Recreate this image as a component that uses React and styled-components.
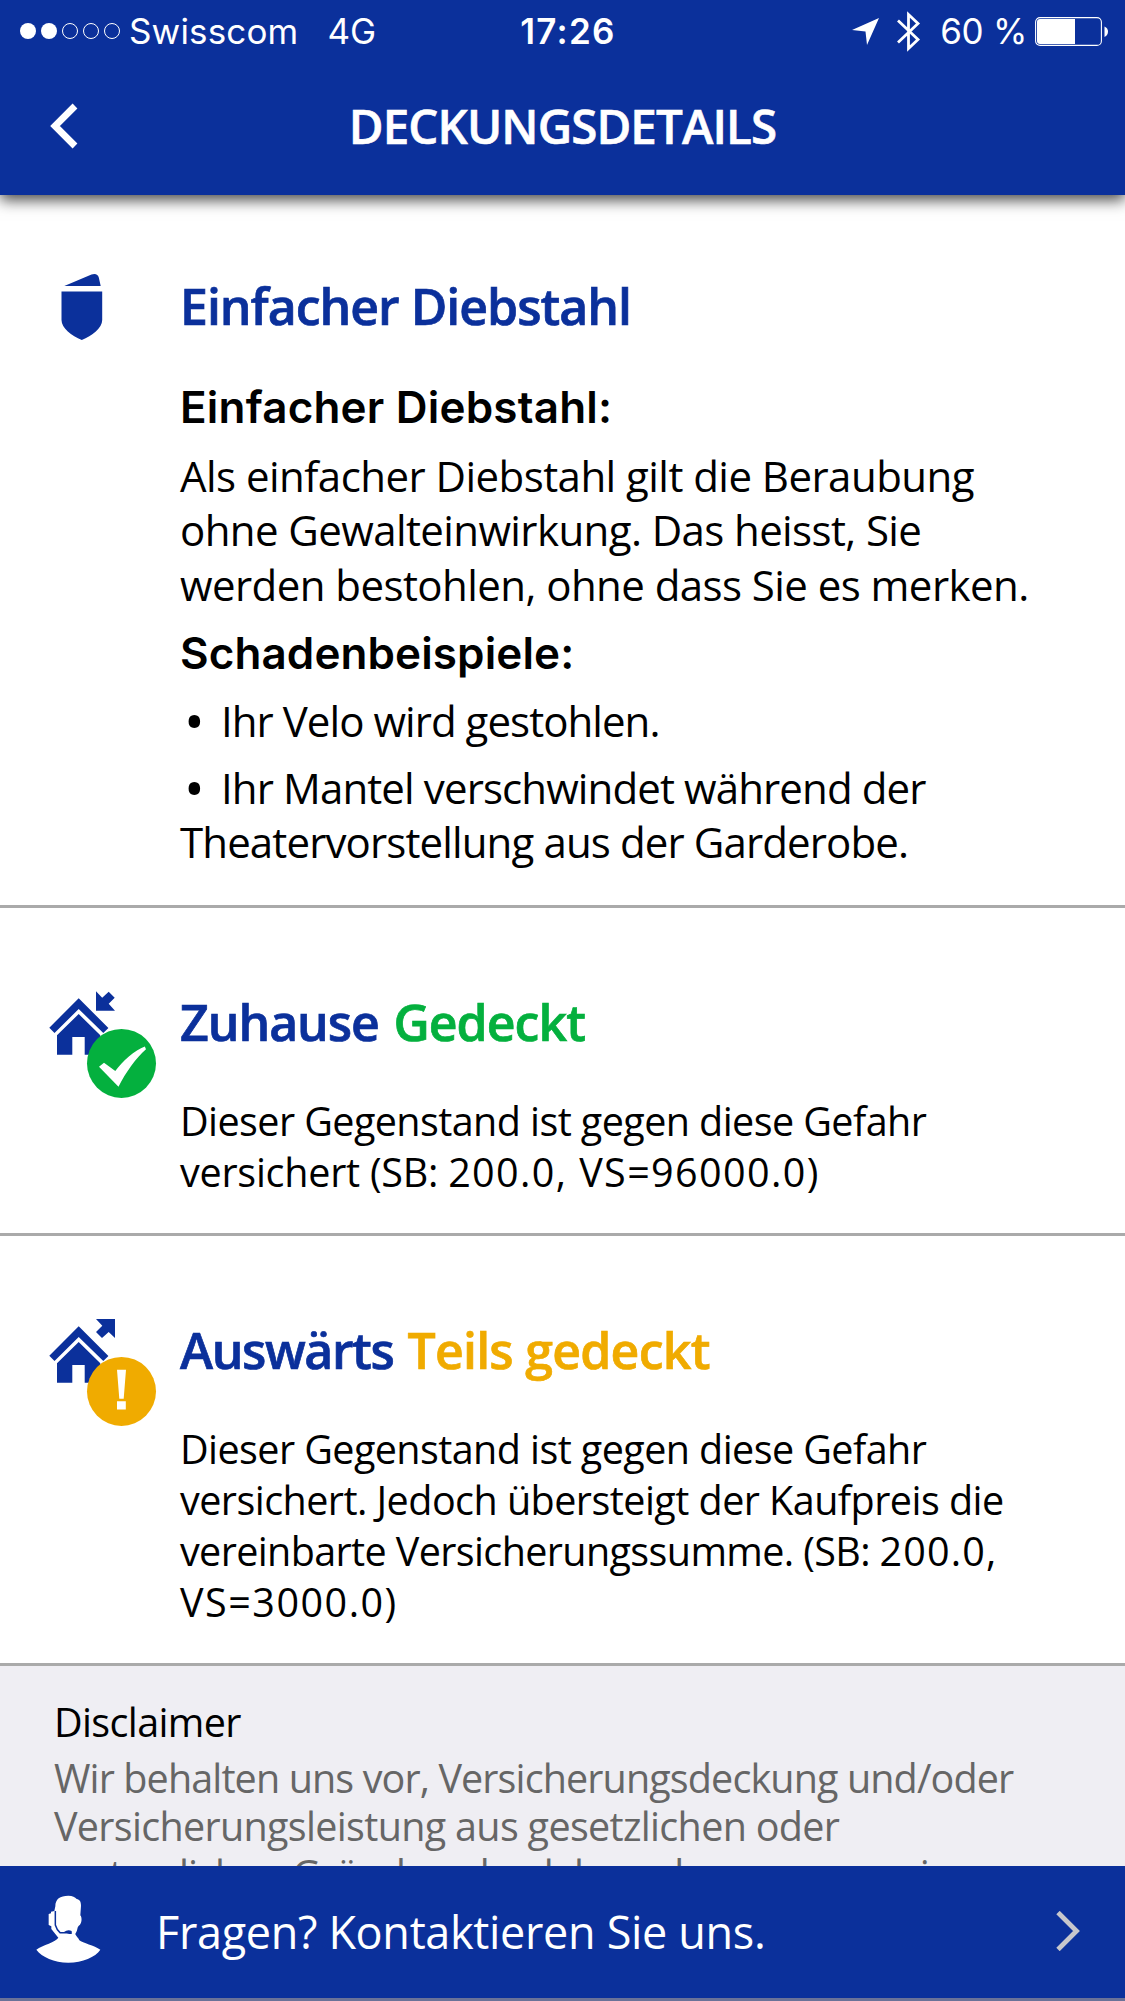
import React from "react";
import styled, { createGlobalStyle } from "styled-components";

const BLUE = "#0b309b";
const GREEN = "#04b03e";
const AMBER = "#f0ab00";
const TEXT_FONT = '"Open Sans", "Noto Sans", sans-serif';
const SYSTEM_FONT = 'Inter, Roboto, sans-serif';

const GlobalStyle = createGlobalStyle`
  * { box-sizing: border-box; }
  body { margin: 0; background: #fff; }
`;

const Screen = styled.div`
  display: flex;
  flex-direction: column;
  width: 1125px;
  height: 2001px;
  overflow: hidden;
  background: #fff;
  font-family: ${TEXT_FONT};
  color: #000;
`;

const Header = styled.header`
  position: relative;
  z-index: 1;
  flex: none;
  height: 195px;
  background: ${BLUE};
  color: #fff;
  box-shadow: 0 5px 14px rgba(0, 0, 0, 0.72);
`;

const StatusBar = styled.div`
  display: grid;
  grid-template-columns: 1fr auto 1fr;
  align-items: center;
  height: 62px;
  padding: 0 16px 0 20px;
  font-family: ${SYSTEM_FONT};
  font-size: 35px;
  line-height: 62px;
`;

const StatusGroup = styled.div`
  display: flex;
  align-items: center;
  justify-content: ${(p) => (p.$end ? "flex-end" : "flex-start")};
`;

const StatusText = styled.span`
  letter-spacing: ${(p) => p.$track || 0}px;
  margin-left: ${(p) => p.$gap || 0}px;
  font-weight: ${(p) => (p.$strong ? 600 : 400)};
  white-space: nowrap;
`;

const StatusIcon = styled.svg`
  display: block;
  flex: none;
  overflow: visible;
  margin-left: ${(p) => p.$gap || 0}px;
`;

const TitleBar = styled.div`
  display: grid;
  grid-template-columns: 180px 1fr 180px;
  align-items: center;
  height: 128px;
`;

const BackIcon = styled.svg`
  display: block;
  margin: -1px 0 0 50px;
`;

const Title = styled.h1`
  margin: 0;
  font-size: 47.5px;
  font-weight: 600;
  line-height: 60px;
  text-align: center;
  white-space: nowrap;
  letter-spacing: ${(p) => p.$track}px;
  -webkit-text-stroke: 0.6px currentColor;
`;

const Content = styled.main`
  flex: 1;
  min-height: 0;
  overflow: hidden;
`;

const Section = styled.section`
  display: grid;
  grid-template-columns: 180px 1fr;
  align-items: start;
  height: ${(p) => p.$height}px;
  padding-top: ${(p) => p.$top}px;
  border-bottom: 3px solid #aaa;
`;

const SectionIcon = styled.svg`
  display: block;
  margin-top: -8px;
`;

const Heading = styled.h2`
  margin: 0 0 ${(p) => p.$after}px;
  font-size: 50px;
  font-weight: 600;
  line-height: 60px;
  white-space: nowrap;
  color: ${BLUE};
  -webkit-text-stroke: 0.7px currentColor;
`;

const HeadingPart = styled.span`
  color: ${(p) => p.$color || BLUE};
  letter-spacing: ${(p) => p.$track}px;
  margin-left: ${(p) => p.$gap || 0}px;
  -webkit-text-stroke-color: currentColor;
`;

const SubHeading = styled.h3`
  margin: 0 0 ${(p) => p.$after}px;
  font-family: ${SYSTEM_FONT};
  font-size: 44px;
  font-weight: 600;
  line-height: 54px;
  white-space: nowrap;
  letter-spacing: ${(p) => p.$track}px;
`;

const Paragraph = styled.p`
  margin: 0 0 ${(p) => p.$after || 0}px;
  font-size: ${(p) => p.$size}px;
  line-height: ${(p) => p.$leading}px;
  color: ${(p) => p.$color || "#000"};
`;

const Line = styled.span`
  display: block;
  white-space: nowrap;
  letter-spacing: ${(p) => p.$track || 0}px;
`;

const Figures = styled.span`
  letter-spacing: ${(p) => p.$track}px;
`;

const Bullet = styled.span`
  display: inline-block;
  width: 41px;
  padding-left: 4px;
  font-size: 55px;
  line-height: 40px;
  vertical-align: -5px;
`;

const Disclaimer = styled.section`
  height: 400px;
  padding: 32px 54px 0;
  background: #efeef3;
`;

const Footer = styled.footer`
  flex: none;
  display: flex;
  align-items: center;
  height: 135px;
  padding: 0 45px 0 36px;
  background: ${BLUE};
  border-bottom: 3px solid #6a7298;
  color: #fff;
`;

const AgentIcon = styled.svg`
  display: block;
  flex: none;
  margin-top: -6px;
`;

const FooterText = styled.span`
  flex: 1;
  margin-left: 53px;
  font-size: 45px;
  line-height: 60px;
  white-space: nowrap;
  letter-spacing: ${(p) => p.$track}px;
`;

const ForwardIcon = styled.svg`
  display: block;
  flex: none;
  margin-top: -3px;
`;

function House({ arrow }) {
  return (
    <g fill={BLUE}>
      <path d="M78.7 6.3 L49.3 35.7 L54.5 41 L78.7 17 L103.3 41 L108.4 36 Z" />
      <path d="M78.7 22 L57 43.3 V62.7 H72.3 V45 H84.7 V62.7 H100.3 V43.3 Z" />
      <path d={arrow} />
    </g>
  );
}

function HomeIcon() {
  return (
    <SectionIcon width="180" height="120" viewBox="0 -8 180 120">
      <House arrow="M96 -.7 L102.2 5.7 L108.7 -.3 L114.7 5.7 L108.7 11.7 L115 18.7 H96 Z" />
      <circle cx="121.5" cy="71.4" r="34.5" fill={GREEN} />
      <path
        d="M99 74.7 L104 70.7 L115.3 79 C122 70 135 58 144.8 54.6 L146 57.3 C136 66 126 80 118.5 94.7 Z"
        fill="#fff"
      />
    </SectionIcon>
  );
}

function AwayIcon() {
  return (
    <SectionIcon width="180" height="120" viewBox="0 -8 180 120">
      <House arrow="M96 -1 H115 V18 L108.7 12 L102 18 L96 12 L102.3 5.7 Z" />
      <circle cx="121.5" cy="71.4" r="34.5" fill={AMBER} />
      <path d="M117 49.7 H126 L123.7 78.7 H119.3 Z M117 81.3 H125.8 V89.6 H117 Z" fill="#fff" />
    </SectionIcon>
  );
}

function ShieldIcon() {
  return (
    <SectionIcon width="180" height="80" viewBox="0 -8 180 80">
      <path
        d="M64.3 10 L91.5 -1.6 Q97.5 -3.4 98.8 1.5 L100.7 10 Z M61.5 15.6 H102.2 V44 C102.2 52 92 60 81.8 64 C71.6 60 61.5 52 61.5 44 Z"
        fill={BLUE}
      />
    </SectionIcon>
  );
}

export default function App() {
  return (
    <Screen>
      <GlobalStyle />
      <Header>
        <StatusBar>
          <StatusGroup>
            <StatusIcon width="100" height="16" viewBox="0 0 100 16">
              {[0, 1, 2, 3, 4].map((i) => (
                <circle
                  key={i}
                  cx={8 + i * 21}
                  cy="8"
                  r={i < 2 ? 8 : 7.5}
                  fill={i < 2 ? "#fff" : "none"}
                  stroke={i < 2 ? "none" : "#fff"}
                />
              ))}
            </StatusIcon>
            <StatusText $gap={9} $track={0.15}>Swisscom</StatusText>
            <StatusText $gap={29}>4G</StatusText>
          </StatusGroup>
          <StatusText $strong $track={1.3} $gap={7}>17:26</StatusText>
          <StatusGroup $end>
            <StatusIcon width="27" height="27" viewBox="0 0 27 27">
              <path d="M27 0 L0 12 L13.5 13.5 L15 27 Z" fill="#fff" />
            </StatusIcon>
            <StatusIcon $gap={18} width="23" height="41" viewBox="0 0 23 41">
              <path d="M1 9.5 L21 28.5 L11.5 37.5 V3.5 L21 12.5 L1 31.5" fill="none" stroke="#fff" strokeWidth="2.8" />
            </StatusIcon>
            <StatusText $gap={20} $track={-0.3}>60 %</StatusText>
            <StatusIcon $gap={8} width="74" height="29" viewBox="0 0 74 29">
              <rect x=".6" y=".6" width="65.8" height="27.8" rx="4.5" fill="none" stroke="#fff" strokeWidth="1.1" />
              <path d="M5 2 H40 V27 H5 Q2 27 2 24 V5 Q2 2 5 2 Z" fill="#fff" />
              <path d="M69.5 9.5 Q73 11 73 14.5 Q73 18 69.5 20 Z" fill="#fff" />
            </StatusIcon>
          </StatusGroup>
        </StatusBar>
        <TitleBar>
          <BackIcon width="28" height="46" viewBox="0 0 28 46">
            <path d="M25 3 L5 23 L25 43" fill="none" stroke="#fff" strokeWidth="6.8" />
          </BackIcon>
          <Title $track={-0.9}>DECKUNGSDETAILS</Title>
        </TitleBar>
      </Header>

      <Content>
        <Section $height={713} $top={81}>
          <ShieldIcon />
          <div>
            <Heading $after={44}>
              <HeadingPart $track={-1}>Einfacher Diebstahl</HeadingPart>
            </Heading>
            <SubHeading $after={14.5} $track={0.2}>Einfacher Diebstahl:</SubHeading>
            <Paragraph $size={42} $leading={54.5} $after={14}>
              <Line $track={-0.54}>Als einfacher Diebstahl gilt die Beraubung</Line>
              <Line $track={-0.6}>ohne Gewalteinwirkung. Das heisst, Sie</Line>
              <Line $track={-0.56}>werden bestohlen, ohne dass Sie es merken.</Line>
            </Paragraph>
            <SubHeading $after={13.5} $track={0.1}>Schadenbeispiele:</SubHeading>
            <Paragraph $size={42} $leading={54.5} $after={12.5}>
              <Line $track={-0.95}><Bullet>•</Bullet>Ihr Velo wird gestohlen.</Line>
            </Paragraph>
            <Paragraph $size={42} $leading={54.5}>
              <Line $track={-0.88}><Bullet>•</Bullet>Ihr Mantel verschwindet während der</Line>
              <Line $track={-0.87}>Theatervorstellung aus der Garderobe.</Line>
            </Paragraph>
          </div>
        </Section>

        <Section $height={328} $top={84}>
          <HomeIcon />
          <div>
            <Heading $after={43.5}>
              <HeadingPart $track={-1.05}>Zuhause</HeadingPart>{" "}
              <HeadingPart $track={-0.95} $gap={1.5} $color={GREEN}>Gedeckt</HeadingPart>
            </Heading>
            <Paragraph $size={39.5} $leading={51}>
              <Line $track={-0.58}>Dieser Gegenstand ist gegen diese Gefahr</Line>
              <Line $track={-0.25}>versichert (SB: <Figures $track={1.4}>200.0, VS=96000.0)</Figures></Line>
            </Paragraph>
          </div>
        </Section>

        <Section $height={430} $top={84}>
          <AwayIcon />
          <div>
            <Heading $after={43.5}>
              <HeadingPart $track={-1.4}>Auswärts</HeadingPart>{" "}
              <HeadingPart $track={-0.75} $gap={1} $color={AMBER}>Teils gedeckt</HeadingPart>
            </Heading>
            <Paragraph $size={39.5} $leading={51}>
              <Line $track={-0.58}>Dieser Gegenstand ist gegen diese Gefahr</Line>
              <Line $track={-0.54}>versichert. Jedoch übersteigt der Kaufpreis die</Line>
              <Line $track={-0.62}>vereinbarte Versicherungssumme. (SB: <Figures $track={1.15}>200.0,</Figures></Line>
              <Line><Figures $track={1.5}>VS=3000.0)</Figures></Line>
            </Paragraph>
          </div>
        </Section>

        <Disclaimer>
          <Paragraph $size={39.5} $leading={48} $after={8}>
            <Line $track={-0.64}>Disclaimer</Line>
          </Paragraph>
          <Paragraph $size={39.5} $leading={48} $color="#666">
            <Line $track={-0.88}>Wir behalten uns vor, Versicherungsdeckung und/oder</Line>
            <Line $track={-0.68}>Versicherungsleistung aus gesetzlichen oder</Line>
            <Line $track={-0.95}>vertraglichen Gründen abzulehnen bzw. zu verweigern</Line>
          </Paragraph>
        </Disclaimer>
      </Content>

      <Footer>
        <AgentIcon width="67" height="72" viewBox="50 130 201 216">
          <path
            d="M108 170 C108 148 122 138 147 138 C160 138 167 142 172 148 C181 150 185 155 185 168 L183 197 C189 205 187 220 182 225 C176 230 175 232 174 238 C173 246 168 250 168 254 C172 262 178 266 180 272 C190 280 225 288 243 300 C228 322 190 339 147 339 C104 339 68 322 51 300 C70 286 110 277 117 264 L96 238 V230 L88 226 V193 L95 191 V186 L105 184 Z"
            fill="#fff"
          />
          <path d="M108 184 V226 Q112 240 122 249 H156" fill="none" stroke={BLUE} strokeWidth="4.5" />
          <path d="M134 247 Q145 239 157 244 V253 H150 Z" fill={BLUE} />
        </AgentIcon>
        <FooterText $track={-0.33}>Fragen? Kontaktieren Sie uns.</FooterText>
        <ForwardIcon width="24" height="40" viewBox="0 0 24 40">
          <path d="M2 1.5 L20.5 20 L2 38.5" fill="none" stroke="#c7c7cc" strokeWidth="4.8" />
        </ForwardIcon>
      </Footer>
    </Screen>
  );
}
